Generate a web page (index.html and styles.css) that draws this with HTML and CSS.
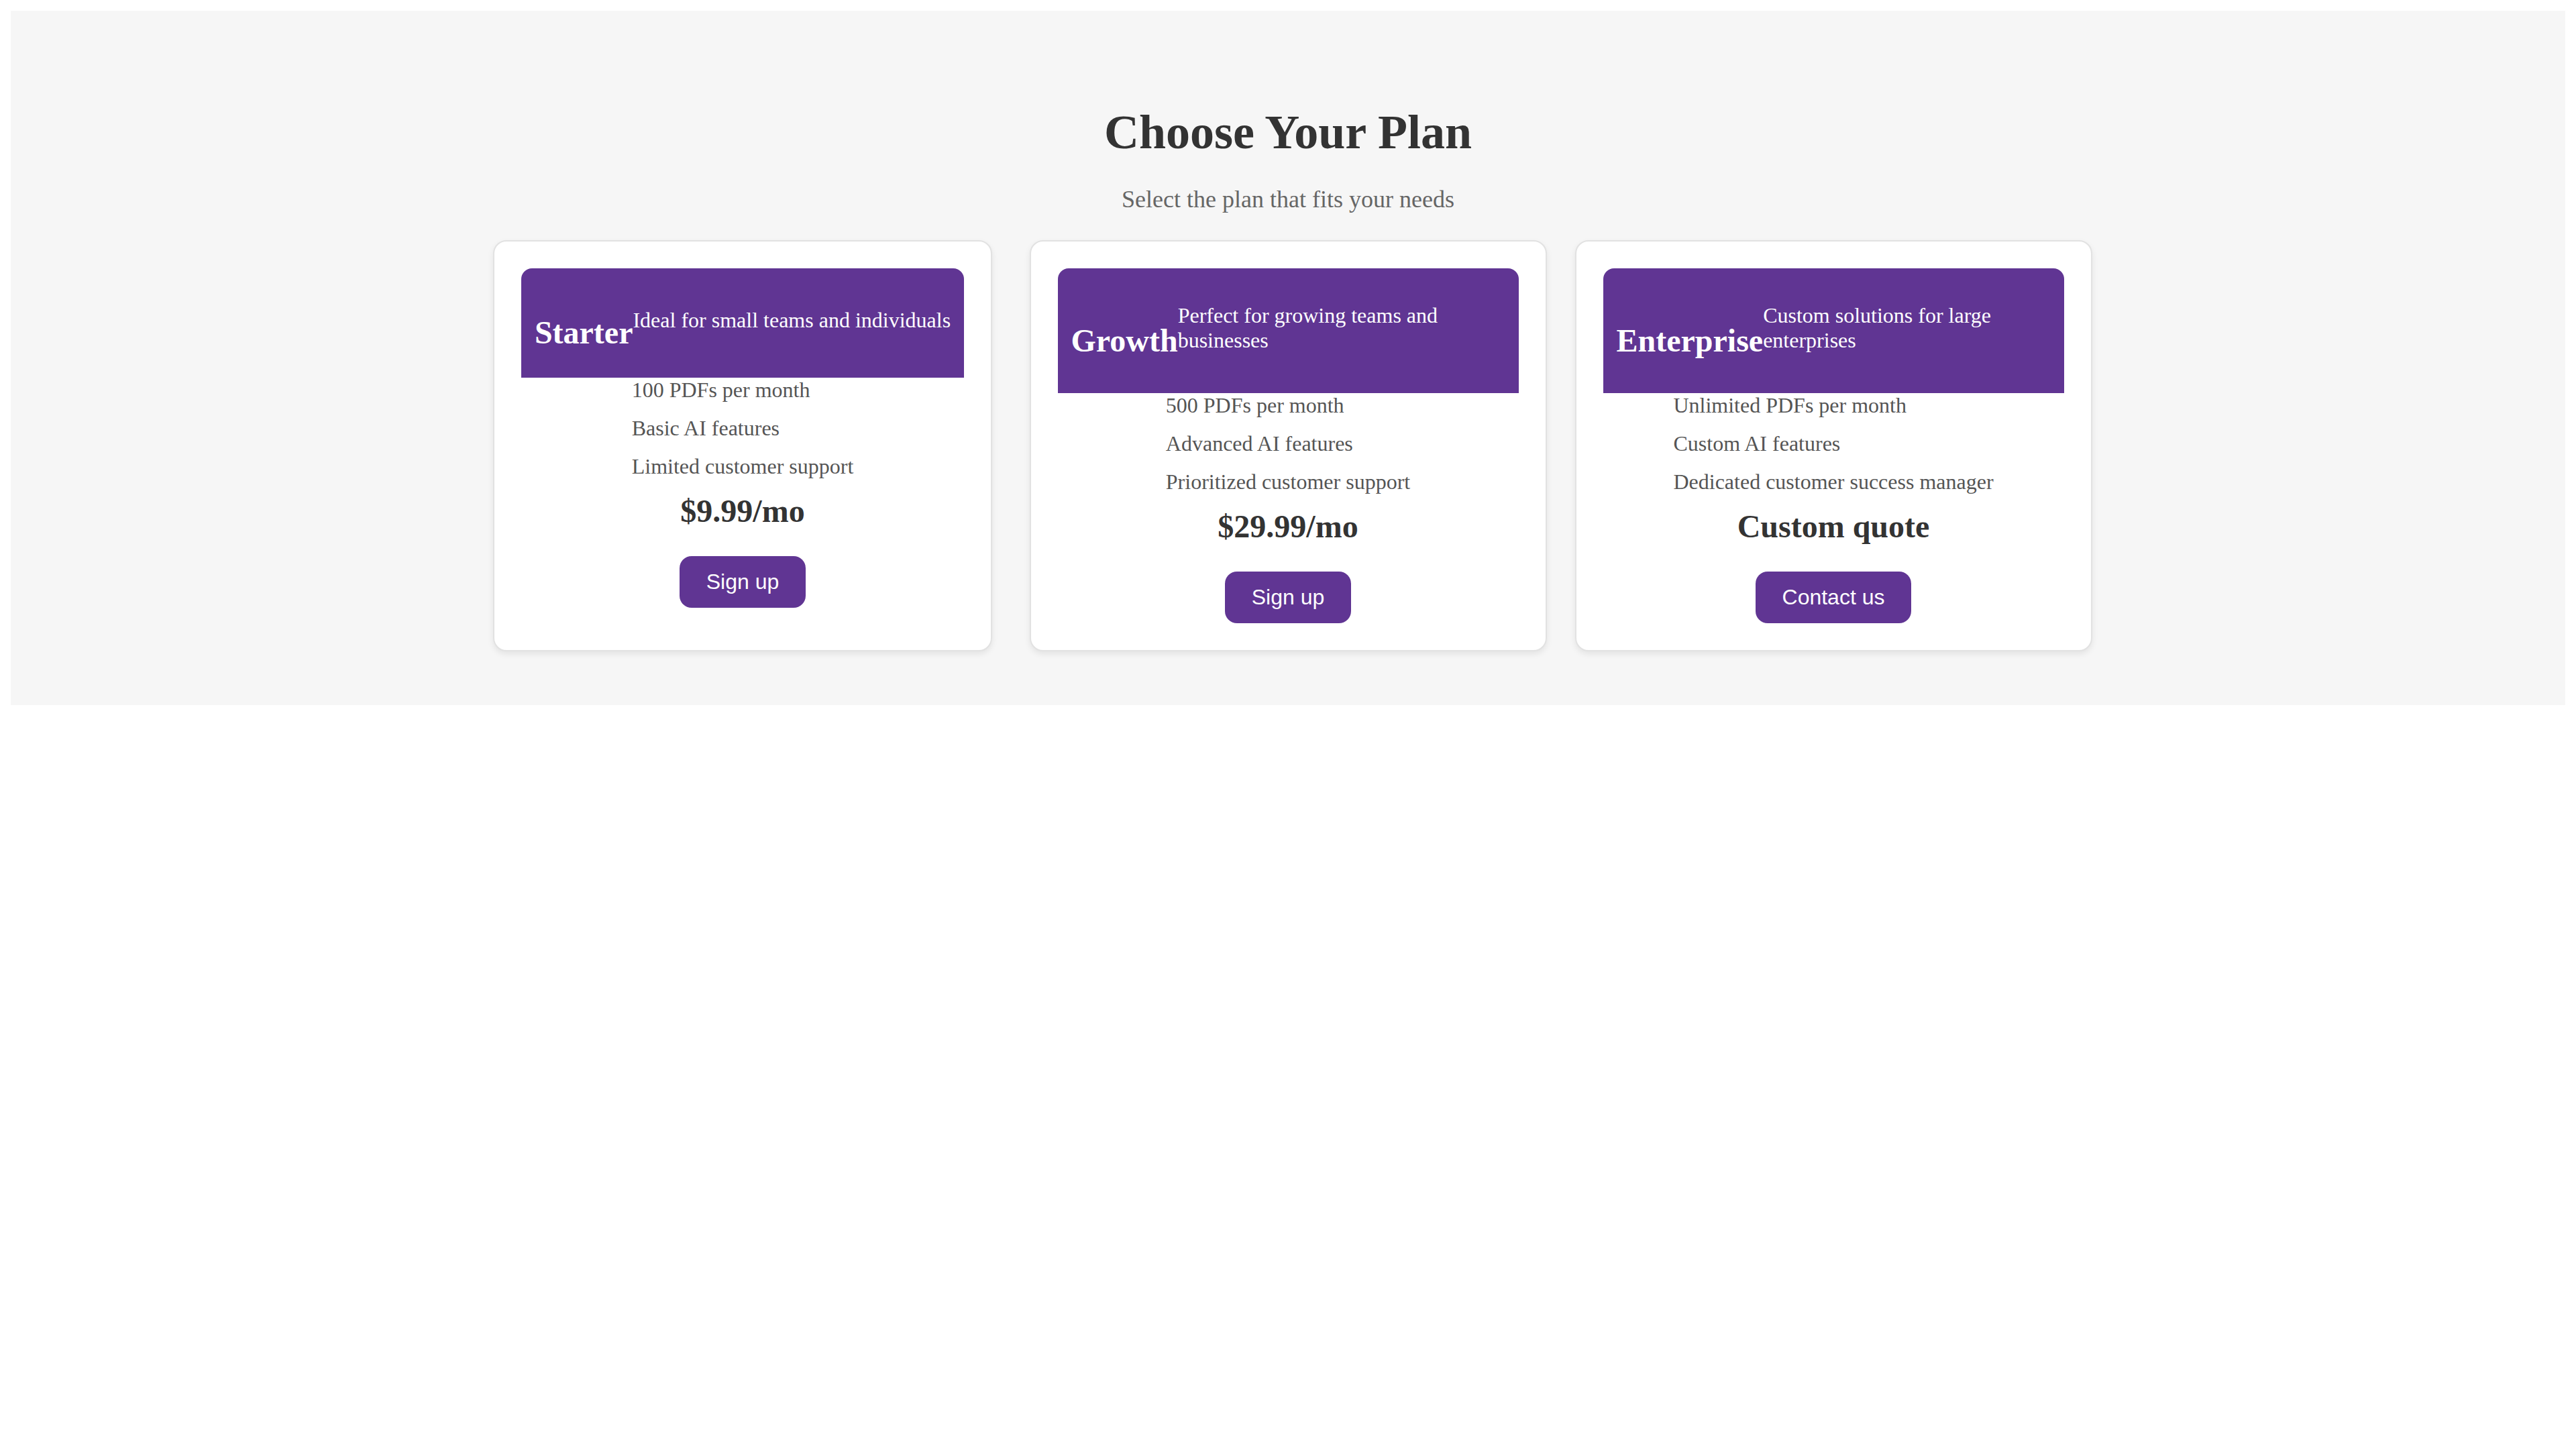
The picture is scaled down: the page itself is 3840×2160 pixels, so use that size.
FILE: index.html
```html
<!DOCTYPE html>
<html lang="en">
<head>
<meta charset="utf-8">
<title>Choose Your Plan</title>
<link rel="stylesheet" href="styles.css">
</head>
<body>
<section class="pricing">
  <h1 class="pricing-title">Choose Your Plan</h1>
  <p class="pricing-subtitle">Select the plan that fits your needs</p>
  <div class="plans">
    <div class="plan">
      <div class="plan-header">
        <h2 class="plan-name">Starter</h2>
        <p class="plan-desc">Ideal for small teams and individuals</p>
      </div>
      <ul class="features">
        <li>100 PDFs per month</li>
        <li>Basic AI features</li>
        <li>Limited customer support</li>
      </ul>
      <div class="price">$9.99/mo</div>
      <button class="plan-btn">Sign up</button>
    </div>
    <div class="plan">
      <div class="plan-header">
        <h2 class="plan-name">Growth</h2>
        <p class="plan-desc">Perfect for growing teams and businesses</p>
      </div>
      <ul class="features">
        <li>500 PDFs per month</li>
        <li>Advanced AI features</li>
        <li>Prioritized customer support</li>
      </ul>
      <div class="price">$29.99/mo</div>
      <button class="plan-btn">Sign up</button>
    </div>
    <div class="plan">
      <div class="plan-header">
        <h2 class="plan-name">Enterprise</h2>
        <p class="plan-desc">Custom solutions for large enterprises</p>
      </div>
      <ul class="features">
        <li>Unlimited PDFs per month</li>
        <li>Custom AI features</li>
        <li>Dedicated customer success manager</li>
      </ul>
      <div class="price">Custom quote</div>
      <button class="plan-btn">Contact us</button>
    </div>
  </div>
</section>
</body>
</html>
```

FILE: styles.css
```css
* {
  box-sizing: border-box;
}

body {
  margin: 16px;
  background: #ffffff;
  font-family: "Liberation Serif", "Times New Roman", serif;
  font-size: 32px;
}

.pricing {
  background: #f6f6f6;
  padding: 80px 0;
}

.pricing-title {
  margin: 60px 0 37px;
  font-size: 72px;
  font-weight: bold;
  color: #333333;
  text-align: center;
}

.pricing-subtitle {
  margin: 0 0 40px;
  font-size: 36px;
  color: #666666;
  text-align: center;
}

.plans {
  display: grid;
  grid-template-columns: repeat(3, 771px);
  column-gap: 42px;
  justify-content: center;
  justify-items: center;
}

.plan {
  display: flex;
  flex-direction: column;
  align-items: center;
  background: #ffffff;
  border: 2px solid #e2e2e2;
  border-radius: 20px;
  box-shadow: 0 4px 10px rgba(0, 0, 0, 0.08);
  padding: 40px;
  max-width: 100%;
}

.plan-header {
  align-self: stretch;
  display: flex;
  align-items: center;
  background: #603593;
  color: #ffffff;
  padding: 40px 20px;
  border-radius: 16px 16px 0 0;
}

.plan-name {
  margin: 28px 0 0;
  font-size: 48px;
  font-weight: bold;
}

.plan-desc {
  margin: 12px 0 20px;
  font-size: 32px;
  text-align: left;
}

.features {
  list-style: none;
  margin: 0;
  padding: 0;
  text-align: left;
  color: #555555;
  font-size: 32px;
}

.features li {
  margin: 0 0 20px;
}

.price {
  margin: 0 0 40px;
  font-size: 48px;
  font-weight: bold;
  color: #333333;
}

.plan-btn {
  font-family: "Liberation Sans", Arial, sans-serif;
  font-size: 32px;
  color: #ffffff;
  background: #603593;
  border: none;
  border-radius: 18px;
  padding: 20px 40px;
  line-height: normal;
}
```
